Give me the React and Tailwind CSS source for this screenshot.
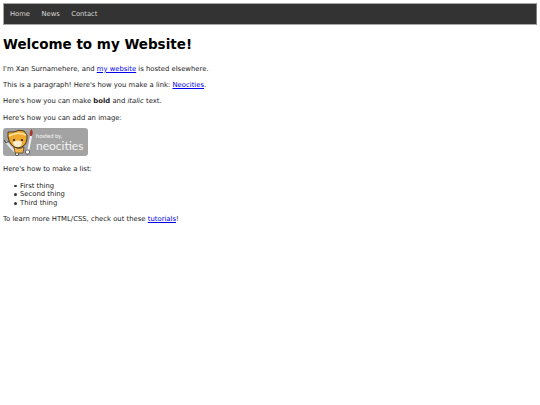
const links = ["Home", "News", "Contact"]
const things = ["First thing", "Second thing", "Third thing"]

function NeocitiesBadge() {
  return (
    <div className="flex h-[28px] w-[85px] items-center rounded-[3px] bg-[#a3a3a3]">
      <svg width="33" height="28" viewBox="0 0 33 28" className="shrink-0">
        {/* wrench */}
        <path d="M3 14 L14 26" stroke="#e8e8e8" strokeWidth="2" />
        <path d="M1 12 L3 15 L6 13" fill="none" stroke="#444" strokeWidth="1" />
        <circle cx="14" cy="26" r="1.7" fill="#e8e8e8" stroke="#444" strokeWidth="0.8" />
        {/* body */}
        <path d="M11 19 Q16 22 21 19 L20 25 L12 25 Z" fill="#f3b64a" stroke="#4a3a20" strokeWidth="0.7" />
        {/* cat head */}
        <path d="M5 9 L5 4 L11 4 Q16 1 21 3 L24 7 L24 11 Q23 19 15 20 Q7 19 5 9 Z" fill="#f0a92e" stroke="#4a3a20" strokeWidth="1" />
        <path d="M10 14 Q15 11 19 14 Q19 19 15 19 Q10 19 10 14 Z" fill="#fbeed0" />
        <circle cx="11" cy="12" r="1.1" fill="#222" />
        <circle cx="19" cy="12" r="1.1" fill="#222" />
        <path d="M6 8 Q14 3 23 7" stroke="#fbe6a0" strokeWidth="1.6" fill="none" />
        {/* brush */}
        <path d="M28 8 L25 24" stroke="#f4f4f4" strokeWidth="2" />
        <path d="M28.5 1 Q31 5 28.5 8 L27 8 Q26 4 28.5 1 Z" fill="#a8342c" />
        <circle cx="24.5" cy="24" r="2.2" fill="#f4f4f4" stroke="#444" strokeWidth="0.8" />
      </svg>
      <div className="flex flex-col font-['Lato',sans-serif] text-[#f4f4f4]">
        <span className="h-[6px] text-[5.8px] leading-[6px]">hosted by,</span>
        <span className="h-[13px] text-[12px] leading-[13px]">neocities</span>
      </div>
    </div>
  )
}

export default function App() {
  return (
    <div className="min-h-[405px] bg-white px-[3px] pt-[3px] font-['DejaVu_Sans',sans-serif] text-[6.85px] leading-[8.7px] text-[#1c1c1c]">
      <nav className="flex h-[22px] w-[534px] items-center gap-[11.5px] border border-[#a6a6a6] border-r-[#808080] bg-[#333333] pl-[6px] text-[6.75px] text-[#d8d8d8]">
        {links.map((link) => (
          <a key={link} href="#">{link}</a>
        ))}
      </nav>

      <h1 className="mt-[10px] mb-[10.7px] text-[13.5px] leading-[19px] font-bold text-black">Welcome to my Website!</h1>

      <p className="mb-[7.6px]">I'm Xan Surnamehere, and <a href="#" className="text-[#0000ee] underline">my website</a> is hosted elsewhere.</p>
      <p className="mb-[7.6px]">This is a paragraph! Here's how you make a link: <a href="#" className="text-[#0000ee] underline">Neocities</a>.</p>
      <p className="mb-[7.6px]">Here's how you can make <b>bold</b> and <i>italic</i> text.</p>
      <p className="mb-[5.8px]">Here's how you can add an image:</p>

      <NeocitiesBadge />

      <p className="mt-[9px] mb-[7.9px]">Here's how to make a list:</p>
      <ul className="mb-[7.6px] pl-[11px]">
        {things.map((thing) => (
          <li key={thing} className="flex items-center">
            <span className="mr-[3.5px] size-[2.5px] rounded-full bg-[#333333]" />
            {thing}
          </li>
        ))}
      </ul>
      <p>To learn more HTML/CSS, check out these <a href="#" className="text-[#0000ee] underline">tutorials</a>!</p>
    </div>
  )
}
